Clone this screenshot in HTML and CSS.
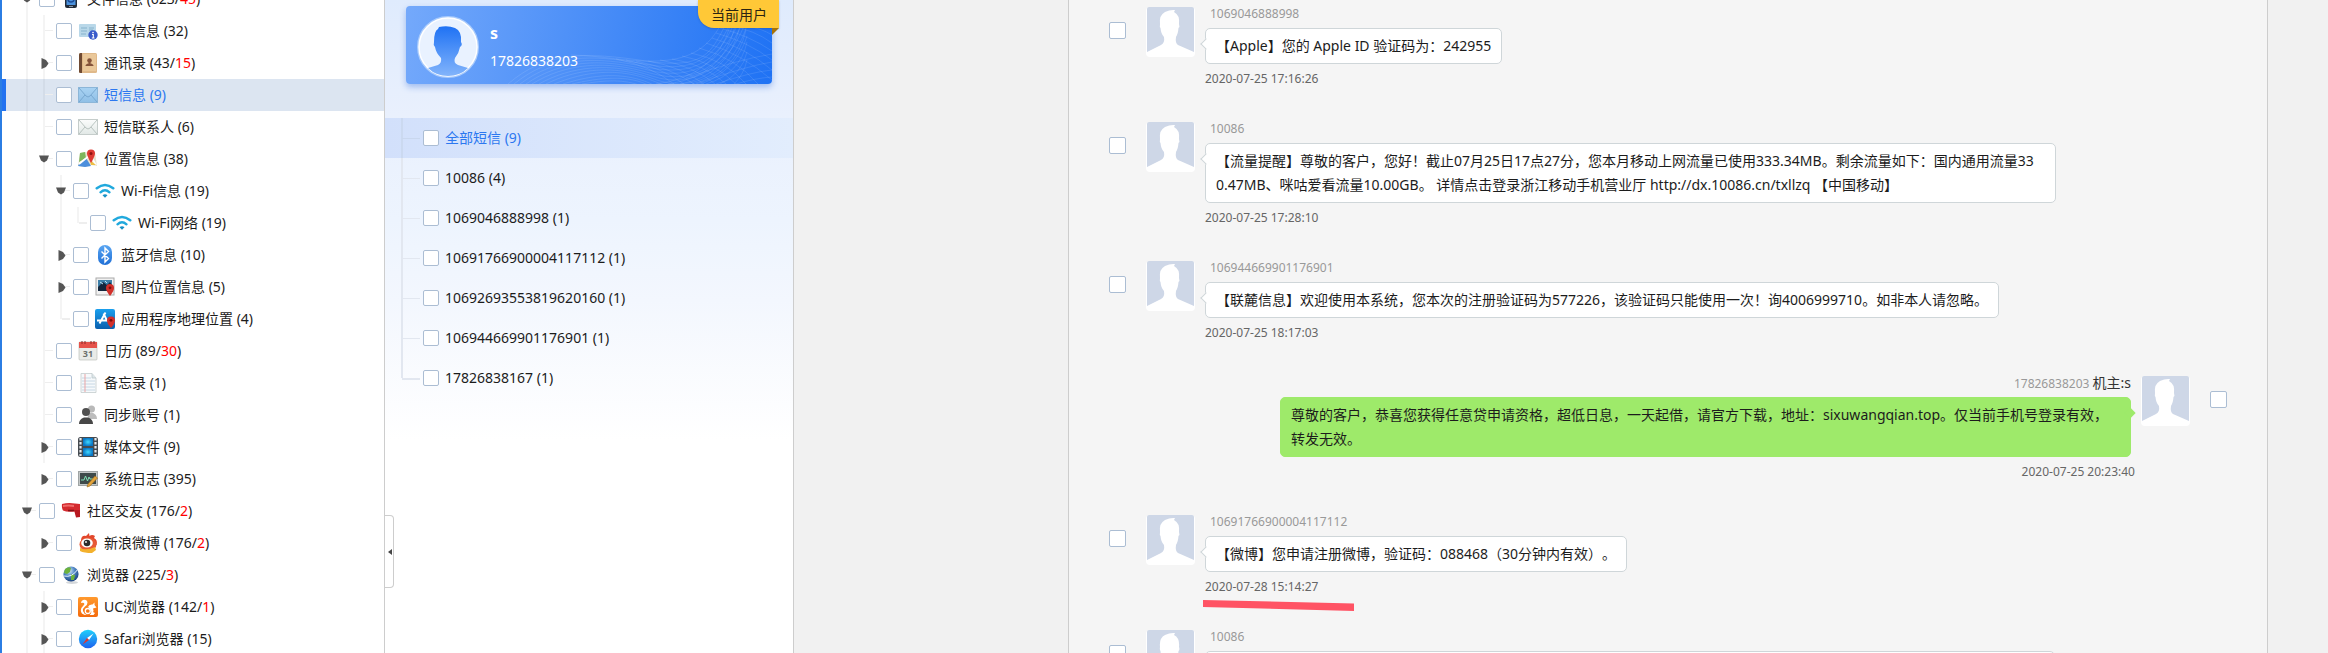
FILE: index.html
```html
<!DOCTYPE html>
<html lang="zh-CN">
<head>
<meta charset="utf-8">
<title>短信息</title>
<link rel="stylesheet" href="styles.css">
</head>
<body>
<svg class="defs" aria-hidden="true">
  <defs>
    <linearGradient id="g-sky" x1="0" y1="0" x2="0" y2="1"><stop offset="0" stop-color="#a9d3f3"/><stop offset="1" stop-color="#8fbfe6"/></linearGradient>
    <linearGradient id="g-pale" x1="0" y1="0" x2="0" y2="1"><stop offset="0" stop-color="#fbfcfc"/><stop offset="1" stop-color="#e1e8e6"/></linearGradient>
    <linearGradient id="g-bt" x1="0" y1="0" x2="0" y2="1"><stop offset="0" stop-color="#5aa6f2"/><stop offset="1" stop-color="#1f6fd6"/></linearGradient>
    <linearGradient id="g-app" x1="0" y1="0" x2="0" y2="1"><stop offset="0" stop-color="#1aa0ee"/><stop offset="1" stop-color="#0a5fae"/></linearGradient>
    <linearGradient id="g-safari" x1="0" y1="0" x2="0" y2="1"><stop offset="0" stop-color="#1fd0fb"/><stop offset="1" stop-color="#1f62ee"/></linearGradient>
    <linearGradient id="g-uc" x1="0" y1="0" x2="0" y2="1"><stop offset="0" stop-color="#ff9a2e"/><stop offset="1" stop-color="#f46a0c"/></linearGradient>
    <linearGradient id="g-head" x1="0" y1="0" x2="0" y2="1"><stop offset="0" stop-color="#1f72f4"/><stop offset="1" stop-color="#82b4fb"/></linearGradient>
    <radialGradient id="g-globe" cx=".4" cy=".3" r=".7"><stop offset="0" stop-color="#d5e9fb"/><stop offset=".5" stop-color="#4f86c4"/><stop offset="1" stop-color="#1c4482"/></radialGradient>
    <radialGradient id="g-film"><stop offset="0" stop-color="#3fd8ff"/><stop offset="1" stop-color="#0a76c4"/></radialGradient>
  </defs>
  <symbol id="i-down" viewBox="0 0 10 8"><path d="M0 .5h10L8 5.5 5 7.500 2 5.500z" fill="#555"/></symbol>
  <symbol id="i-right" viewBox="0 0 8 11"><path d="M.5 0 5 2l2.500 3.500L5 9 .5 11z" fill="#555"/></symbol>
  <symbol id="i-phone" viewBox="0 0 20 20"><rect x="4" y="0" width="12" height="19" rx="2" fill="#222c3a"/><rect x="5.500" y="2" width="9" height="14" fill="#4b92dd"/><circle cx="10" cy="10" r="3" fill="none" stroke="#1d4b96" stroke-width="1.500"/><rect x="8" y="17" width="4" height="1" fill="#8794a4"/></symbol>
  <symbol id="i-info" viewBox="0 0 20 20"><rect x="1" y="3" width="17" height="13" rx="1" fill="#b9d8e9"/><path d="M3 7h6M3 10h6M3 13h5M11 7h5M11 9h4" stroke="#86b3cd"/><circle cx="15" cy="14" r="4.700" fill="#3a5ccb"/><circle cx="15" cy="11.600" r=".8" fill="#fff"/><path d="M14 13.500h1.300V17M13.800 17h2.700" stroke="#fff" stroke-width="1.100" fill="none"/></symbol>
  <symbol id="i-book" viewBox="0 0 20 20"><rect x="1" y="0" width="18" height="20" rx="1.500" fill="#e0b98a"/><rect x="5" y="1" width="13" height="17" fill="#eac89a"/><path d="M1 1.500Q1 0 2.500 0H4v20H2.500Q1 20 1 18.500z" fill="#6f4a33"/><circle cx="11.500" cy="7.500" r="2.300" fill="#84533a"/><path d="M7.500 13q0-2 3-2.500V9h2v1.500q3 .5 3 2.500z" fill="#84533a"/></symbol>
  <symbol id="i-mail-blue" viewBox="0 0 20 20"><rect x=".5" y="2.500" width="19" height="15" fill="url(#g-sky)" stroke="#8cb6d8"/><path d="M1 3l7 8q2 2 4 0l7-8M1 17l6-7M19 17l-6-7" fill="none" stroke="#6f9fc9" stroke-width=".8"/></symbol>
  <symbol id="i-mail" viewBox="0 0 20 20"><rect x=".5" y="2.500" width="19" height="15" fill="url(#g-pale)" stroke="#c5cdcb"/><path d="M1 3l7 8q2 2 4 0l7-8M1 17l6-7M19 17l-6-7" fill="none" stroke="#a9b6b2" stroke-width=".8"/></symbol>
  <symbol id="i-map" viewBox="0 0 20 20"><path d="M2 4l5-1 5 1 5-1 2 14-6-1-6 2-7-1z" fill="#e8e2cc"/><path d="M2 4l5-1 1 6-7 4z" fill="#7db65c"/><path d="M1 15l7-6 5 8-6 1-7-1z" fill="#4c8fdc"/><path d="M1 15l11-9 6 10" fill="none" stroke="#fff" stroke-width="1.800"/><path d="M12 11l6 5-5 0z" fill="#eebf45"/><path d="M13 14Q9 7 9 4.500A4 4 0 0 1 17 4.500Q17 7 13 14z" fill="#dd3a33"/><circle cx="13" cy="4.500" r="1.500" fill="#8e1410"/></symbol>
  <symbol id="i-wifi" viewBox="0 0 20 20"><g fill="none" stroke="#21a9dd" stroke-linecap="round"><path d="M1.800 7.200Q10 .8 18.200 7.200" stroke-width="2.600"/><path d="M5.500 11.300Q10 7.300 14.500 11.300" stroke-width="2.400"/></g><path d="M7.500 14.200q2.500-1.700 5 0L10 16.700z" fill="#1790c6"/></symbol>
  <symbol id="i-bt" viewBox="0 0 20 20"><rect x="3" y="0" width="14" height="20" rx="7" fill="url(#g-bt)"/><path d="M6.500 6.500l7 7L10 17V3l3.500 3.500-7 7" fill="none" stroke="#fff" stroke-width="1.400"/></symbol>
  <symbol id="i-photo" viewBox="0 0 20 20"><rect x="1" y="1" width="18" height="17" fill="#f1f1f1" stroke="#aaa"/><rect x="3" y="3" width="14" height="11" fill="#14263d"/><path d="M3 10l5-5 4 3 3-3 2 3v-5H3z" fill="#3d7fa8"/><path d="M5 5l3 2M10 4l2 2" stroke="#bfe3f2"/><path d="M15 19q-4-5-4-8a4 4 0 0 1 8 0q0 3-4 8z" fill="#d2302b"/><circle cx="15" cy="10.800" r="1.400" fill="#7e0f0c"/></symbol>
  <symbol id="i-app" viewBox="0 0 20 20"><rect width="20" height="20" rx="2" fill="url(#g-app)"/><path d="M10.500 3.500L4.500 14.500M8.500 4.500l4 8M2 11.500h9" stroke="#fff" stroke-width="1.900" fill="none"/><path d="M16 19q-4-4.500-4-7.500a4 4 0 0 1 8 0q0 3-4 7.500z" fill="#d2302b"/><circle cx="16" cy="11.300" r="1.400" fill="#7e0f0c"/></symbol>
  <symbol id="i-cal" viewBox="0 0 20 20"><rect x="1" y="1" width="18" height="18" rx="1" fill="#e9ebe8" stroke="#b5b8b4" stroke-width=".6"/><path d="M1 1h18v6H1z" fill="#e6534b"/><path d="M4 0v3M7 0v3M13 0v3M16 0v3" stroke="#8c2f2a"/><text x="10" y="15.500" font-family="Noto Sans" font-size="9" font-weight="700" text-anchor="middle" fill="#6b706d">31</text></symbol>
  <symbol id="i-note" viewBox="0 0 20 20"><path d="M3 .5h11l4 4.500v14.500H3z" fill="#f6f9fb" stroke="#c4cccd" stroke-width=".8"/><path d="M14 .5V5h4" fill="#dde6ea" stroke="#b8c3c6" stroke-width=".7"/><path d="M4 5h9M4 8h13M4 11h13M4 14h13M4 17h13" stroke="#bccfe0" stroke-width=".8"/><path d="M7 1v18" stroke="#eba5a5"/></symbol>
  <symbol id="i-users" viewBox="0 0 20 20"><circle cx="13.500" cy="4" r="3.500" fill="#b9b9b9"/><path d="M10 14q-1-6 3-6.500 6 1 6 6.500z" fill="#bdbdbd"/><circle cx="8" cy="7" r="4" fill="#505050"/><path d="M1 19q0-5 5-6.500h4q5 1.500 5 6.500z" fill="#474747"/></symbol>
  <symbol id="i-film" viewBox="0 0 20 20"><rect width="20" height="20" rx="2.500" fill="#454b51"/><path d="M2.500 1v18M17.500 1v18" stroke="#e8eaec" stroke-width="2.200" stroke-dasharray="2.500 1.500"/><rect x="5" y="1" width="10" height="8" fill="url(#g-film)"/><rect x="5" y="11" width="10" height="8" fill="url(#g-film)"/></symbol>
  <symbol id="i-log" viewBox="0 0 20 20"><rect x=".5" y="2.500" width="19" height="14" fill="#c2c6c6" stroke="#9fa4a4"/><rect x="2" y="4" width="16" height="11" fill="#3e4a4a"/><path d="M3 11h3l1.500-4 2 5 1.500-4 1 2h3" fill="none" stroke="#7fe0b4"/><path d="M9 18l1-3 7-8 2.500 2-7.500 8z" fill="#e3a43c" stroke="#9b6a1b" stroke-width=".6"/></symbol>
  <symbol id="i-cam" viewBox="0 0 20 20"><path d="M1 3q6-1.500 13-.5l5 .5v7l-5 .5Q6 11.500 2 9.500.5 7 1 3z" fill="#d42a2e"/><path d="M13 9h6v7l-4 .5z" fill="#b81820"/><path d="M2 4q6-1 11 0v2q-6-1-11 0z" fill="#ef6a68"/><path d="M7 9.500h6" stroke="#821016" stroke-width="1.500"/></symbol>
  <symbol id="i-weibo" viewBox="0 0 20 20"><path d="M3 8Q3 2 8 3l3-3 .5 3Q14 1 17 3l-1 2q4 2 2.500 7z" fill="#e2472c"/><ellipse cx="10" cy="11.500" rx="8.500" ry="7" fill="#e75a36"/><path d="M2 15q6 3 15-1l1 3-4 3q-8 0-12-2z" fill="#f3b12d"/><ellipse cx="9" cy="10" rx="5.800" ry="4.500" fill="#fff"/><circle cx="9" cy="10" r="3.300" fill="#2b2b2b"/><circle cx="8" cy="9" r="1.100" fill="#ddd"/></symbol>
  <symbol id="i-globe" viewBox="0 0 20 20"><ellipse cx="11" cy="17.500" rx="6" ry="1.500" fill="#d4d7da"/><circle cx="10" cy="9" r="7.600" fill="url(#g-globe)"/><path d="M4 4q4-3 6-1l-1 4-3 2-3-1zM10 9l4 1-1 5-3 0z" fill="#6cb23c"/><path d="M3 11q8 2 14-7" fill="none" stroke="#e6f2ff"/></symbol>
  <symbol id="i-uc" viewBox="0 0 20 20"><rect width="20" height="20" rx="2" fill="url(#g-uc)"/><path d="M5 3Q9 2 9.500 5.500 9.500 8 7 9.500 4.500 11.500 5 14 6 17 9 18H7Q3 17 2.800 13.500 3 10.500 5.500 8.500 7 7 6 6 5 5.500 3 6 3 4 5 3z" fill="#fff"/><path d="M10 10Q11 7 14.500 7.500L16.500 5.500V8l2 2.500-3.500 1Q16 14 15 15l2 1-1.500 2h-4Q14 16 13 13.500 12 11 10 10z" fill="#fff"/><circle cx="9.800" cy="14" r="2.500" fill="none" stroke="#fff" stroke-width="1.300"/></symbol>
  <symbol id="i-safari" viewBox="0 0 20 20"><circle cx="10" cy="10" r="9.200" fill="url(#g-safari)"/><path d="M15.500 4.500L11 11 9 9z" fill="#fff"/><path d="M4.500 15.500L9 9l2 2z" fill="#e2332e"/></symbol>
  <symbol id="i-person" viewBox="0 0 49 50"><rect width="49" height="50" rx="4" fill="#fff"/><rect x="1" width="47" height="47" rx="2" fill="#ced7e7"/><path d="M1 45L15 38Q19 36 18 30 15 27 14.500 21 13.500 20 14 17 13 8 19 5 24 2.500 29 3L28 5Q34 8 33 17 34 20 32.500 21 32 27 30 30 29 36 32 38L48 45V48H1z" fill="#fff"/></symbol>
</svg>

<div class="app">
  <nav class="sidebar" aria-label="数据目录">
    <ul class="tree">
      <li>
        <div class="row"><button class="twist" aria-label="收起"><svg class="down"><use href="#i-down"/></svg></button><label><input type="checkbox"><svg class="icon"><use href="#i-phone"/></svg><span>文件信息 (623/<em>45</em>)</span></label></div>
        <ul class="lv2 lined">
          <li><div class="row"><span class="twist"></span><label><input type="checkbox"><svg class="icon"><use href="#i-info"/></svg><span>基本信息 (32)</span></label></div></li>
          <li><div class="row"><button class="twist" aria-label="展开"><svg class="right"><use href="#i-right"/></svg></button><label><input type="checkbox"><svg class="icon"><use href="#i-book"/></svg><span>通讯录 (43/<em>15</em>)</span></label></div></li>
          <li><div class="row selected"><span class="twist"></span><label><input type="checkbox"><svg class="icon"><use href="#i-mail-blue"/></svg><span>短信息 (9)</span></label></div></li>
          <li><div class="row"><span class="twist"></span><label><input type="checkbox"><svg class="icon"><use href="#i-mail"/></svg><span>短信联系人 (6)</span></label></div></li>
          <li>
            <div class="row"><button class="twist" aria-label="收起"><svg class="down"><use href="#i-down"/></svg></button><label><input type="checkbox"><svg class="icon"><use href="#i-map"/></svg><span>位置信息 (38)</span></label></div>
            <ul class="lv3 lined leaf-end">
              <li>
                <div class="row"><button class="twist" aria-label="收起"><svg class="down"><use href="#i-down"/></svg></button><label><input type="checkbox"><svg class="icon"><use href="#i-wifi"/></svg><span>Wi-Fi信息 (19)</span></label></div>
                <ul class="lv4 lined leaf-end">
                  <li><div class="row"><span class="twist corner"></span><label><input type="checkbox"><svg class="icon"><use href="#i-wifi"/></svg><span>Wi-Fi网络 (19)</span></label></div></li>
                </ul>
              </li>
              <li><div class="row"><button class="twist" aria-label="展开"><svg class="right"><use href="#i-right"/></svg></button><label><input type="checkbox"><svg class="icon"><use href="#i-bt"/></svg><span>蓝牙信息 (10)</span></label></div></li>
              <li><div class="row"><button class="twist" aria-label="展开"><svg class="right"><use href="#i-right"/></svg></button><label><input type="checkbox"><svg class="icon"><use href="#i-photo"/></svg><span>图片位置信息 (5)</span></label></div></li>
              <li><div class="row"><span class="twist corner"></span><label><input type="checkbox"><svg class="icon"><use href="#i-app"/></svg><span>应用程序地理位置 (4)</span></label></div></li>
            </ul>
          </li>
          <li><div class="row"><span class="twist"></span><label><input type="checkbox"><svg class="icon"><use href="#i-cal"/></svg><span>日历 (89/<em>30</em>)</span></label></div></li>
          <li><div class="row"><span class="twist"></span><label><input type="checkbox"><svg class="icon"><use href="#i-note"/></svg><span>备忘录 (1)</span></label></div></li>
          <li><div class="row"><span class="twist"></span><label><input type="checkbox"><svg class="icon"><use href="#i-users"/></svg><span>同步账号 (1)</span></label></div></li>
          <li><div class="row"><button class="twist" aria-label="展开"><svg class="right"><use href="#i-right"/></svg></button><label><input type="checkbox"><svg class="icon"><use href="#i-film"/></svg><span>媒体文件 (9)</span></label></div></li>
          <li><div class="row"><button class="twist" aria-label="展开"><svg class="right"><use href="#i-right"/></svg></button><label><input type="checkbox"><svg class="icon"><use href="#i-log"/></svg><span>系统日志 (395)</span></label></div></li>
        </ul>
      </li>
      <li>
        <div class="row"><button class="twist" aria-label="收起"><svg class="down"><use href="#i-down"/></svg></button><label><input type="checkbox"><svg class="icon"><use href="#i-cam"/></svg><span>社区交友 (176/<em>2</em>)</span></label></div>
        <ul class="lv2">
          <li><div class="row"><button class="twist" aria-label="展开"><svg class="right"><use href="#i-right"/></svg></button><label><input type="checkbox"><svg class="icon"><use href="#i-weibo"/></svg><span>新浪微博 (176/<em>2</em>)</span></label></div></li>
        </ul>
      </li>
      <li>
        <div class="row"><button class="twist" aria-label="收起"><svg class="down"><use href="#i-down"/></svg></button><label><input type="checkbox"><svg class="icon"><use href="#i-globe"/></svg><span>浏览器 (225/<em>3</em>)</span></label></div>
        <ul class="lv2 lined open-end">
          <li><div class="row"><button class="twist" aria-label="展开"><svg class="right"><use href="#i-right"/></svg></button><label><input type="checkbox"><svg class="icon"><use href="#i-uc"/></svg><span>UC浏览器 (142/<em>1</em>)</span></label></div></li>
          <li><div class="row"><button class="twist" aria-label="展开"><svg class="right"><use href="#i-right"/></svg></button><label><input type="checkbox"><svg class="icon"><use href="#i-safari"/></svg><span>Safari浏览器 (15)</span></label></div></li>
        </ul>
      </li>
    </ul>
  </nav>

  <aside class="contacts">
    <section class="card">
      <svg class="waves" viewBox="0 0 366 78" preserveAspectRatio="xMaxYMid slice" aria-hidden="true">
        <g fill="none" stroke="#fff" stroke-opacity=".13" stroke-width=".8">
          <path d="M165 49C200 50 220 56 250 55S300 45 314 20"/>
          <path d="M102 78C140 45 180 46 240 55S305 45 319 20"/>
          <path d="M108 78C145 48 185 48 238 58S308 50 323 20"/>
          <path d="M114 78C150 51 190 50 240 61S312 52 327 20"/>
          <path d="M120 78C155 54 195 52 242 64S315 54 331 20"/>
          <path d="M126 78C160 57 200 54 244 67S318 58 335 20"/>
          <path d="M133 78C165 60 205 56 246 70S322 60 338 20"/>
          <path d="M140 78C170 63 208 58 248 73S326 66 340 22"/>
          <path d="M148 78C178 66 212 60 250 76S330 68 341 30"/>
          <path d="M157 78C186 69 218 64 250 80"/>
          <path d="M166 78C192 72 222 68 244 80"/>
          <path d="M176 78C200 74 218 73 236 80"/>
          <path d="M210 53Q245 60 268 78M220 54Q255 61 278 78M230 55Q265 62 288 78M242 55Q276 61 298 78M254 54Q288 60 309 78M266 53Q298 58 320 78M276 50Q308 56 330 78M285 47Q320 54 340 78M293 42Q330 52 352 78M300 37Q336 48 366 74M306 32Q340 42 366 64M310 27Q342 36 366 54M314 22Q344 30 366 45M325 20Q348 24 366 37M340 20Q355 22 366 29"/>
          <path d="M250 78Q310 70 324 20M262 78Q318 70 329 20M274 78Q322 70 334 20M286 78Q330 68 340 24M300 78Q334 68 341 36M314 78Q336 68 341 46M328 78Q338 68 341 54"/>
          <path d="M290 78Q340 60 366 56M310 78Q345 66 366 64M330 78Q350 72 366 71M280 72Q330 54 366 48"/>
        </g>
      </svg>
      <svg class="portrait" viewBox="0 0 62 62" aria-hidden="true">
        <circle cx="31" cy="31" r="30" fill="#e9f2ff" stroke="#a9cbfc" stroke-width="2"/>
        <circle cx="31" cy="31" r="29" fill="none" stroke="#fff" stroke-width="1.500"/>
        <path d="M11 52L21 49Q25 47 24 42 19 37 18 31 16 29 17 26 17 15 21 13L22 11Q31 9 38 12 45 15 44 26 46 29 43 31 42 37 38 42 36 47 41 49L51 52Q43 60 31 60T11 52z" fill="url(#g-head)"/>
      </svg>
      <div class="who"><strong>s</strong><span>17826838203</span></div>
      <span class="badge">当前用户</span>
    </section>
    <ul class="threads">
      <li class="selected"><label><input type="checkbox"><span>全部短信 (9)</span></label></li>
      <li><label><input type="checkbox"><span>10086 (4)</span></label></li>
      <li><label><input type="checkbox"><span>1069046888998 (1)</span></label></li>
      <li><label><input type="checkbox"><span>10691766900004117112 (1)</span></label></li>
      <li><label><input type="checkbox"><span>10692693553819620160 (1)</span></label></li>
      <li><label><input type="checkbox"><span>106944669901176901 (1)</span></label></li>
      <li><label><input type="checkbox"><span>17826838167 (1)</span></label></li>
    </ul>
    <button class="collapse" aria-label="收起侧栏"><svg viewBox="0 0 4 6"><path d="M4 0v6L0 3z" fill="#444"/></svg></button>
  </aside>

  <main class="chat">
    <div class="messages">
      <article class="msg">
        <input type="checkbox" aria-label="选择消息"><svg class="avatar"><use href="#i-person"/></svg>
        <div class="body"><div class="name">1069046888998</div><p class="bubble">【Apple】您的 Apple ID 验证码为：242955</p><time>2020-07-25 17:16:26</time></div>
      </article>
      <article class="msg">
        <input type="checkbox" aria-label="选择消息"><svg class="avatar"><use href="#i-person"/></svg>
        <div class="body"><div class="name">10086</div><p class="bubble">【流量提醒】尊敬的客户，您好！截止07月25日17点27分，您本月移动上网流量已使用333.34MB。剩余流量如下：国内通用流量330.47MB、咪咕爱看流量10.00GB。 详情点击登录浙江移动手机营业厅 http://dx.10086.cn/txllzq 【中国移动】</p><time>2020-07-25 17:28:10</time></div>
      </article>
      <article class="msg">
        <input type="checkbox" aria-label="选择消息"><svg class="avatar"><use href="#i-person"/></svg>
        <div class="body"><div class="name">106944669901176901</div><p class="bubble">【联麓信息】欢迎使用本系统，您本次的注册验证码为577226，该验证码只能使用一次！询4006999710。如非本人请忽略。</p><time>2020-07-25 18:17:03</time></div>
      </article>
      <article class="msg own">
        <input type="checkbox" aria-label="选择消息"><svg class="avatar"><use href="#i-person"/></svg>
        <div class="body"><div class="name">17826838203 <b>机主:s</b></div><p class="bubble">尊敬的客户，恭喜您获得任意贷申请资格，超低日息，一天起借，请官方下载，地址：sixuwangqian.top。仅当前手机号登录有效，转发无效。</p><time>2020-07-25 20:23:40</time></div>
      </article>
      <article class="msg">
        <input type="checkbox" aria-label="选择消息"><svg class="avatar"><use href="#i-person"/></svg>
        <div class="body"><div class="name">10691766900004117112</div><p class="bubble">【微博】您申请注册微博，验证码：088468（30分钟内有效）。</p><time>2020-07-28 15:14:27</time>
          <svg class="mark" viewBox="0 0 151 11" aria-hidden="true"><path d="M0 0L151 3.500V11L0 7z" fill="#ff5364"/></svg></div>
      </article>
      <article class="msg">
        <input type="checkbox" aria-label="选择消息"><svg class="avatar"><use href="#i-person"/></svg>
        <div class="body"><div class="name">10086</div><p class="bubble full"></p></div>
      </article>
    </div>
  </main>
</div>
</body>
</html>
```
FILE: styles.css
```css
* { box-sizing: border-box; }

body {
  margin: 0;
  overflow: hidden;
  font: 14px/24px "Noto Sans", "Noto Sans CJK SC", sans-serif;
  color: #1c1c1c;
  text-spacing-trim: space-all;
}

ul { margin: 0; padding: 0; list-style: none; }
em { font-style: normal; color: #f00; }
button { border: 0; padding: 0; background: none; }
svg { display: block; flex: none; }
.defs { position: absolute; width: 0; height: 0; }

input[type="checkbox"] {
  appearance: none;
  flex: none;
  width: 16px;
  height: 16px;
  margin: 0;
  border: 1px solid #abbdd3;
  border-radius: 2px;
  background: #fff;
}

.app {
  display: flex;
  height: 100vh;
  border-left: 2px solid #2b7de3;
  background: #f1f1f1;
}

/* directory tree */
.sidebar {
  flex: none;
  width: 383px;
  overflow: hidden;
  border-right: 1px solid #cdcdcd;
  background: #fff;
}
.tree {
  margin-top: -17px;
  background: linear-gradient(#f4f4f4, #f4f4f4) 24px 0 / 2px 100% no-repeat;
}
.row {
  display: flex;
  align-items: center;
  height: 32px;
  padding-left: 20px;
}
.row label { display: flex; align-items: center; gap: 6px; white-space: nowrap; }
.lv2 .row { padding-left: 37px; }
.lv3 .row { padding-left: 54px; }
.lv4 .row { padding-left: 71px; }
.lined { background: linear-gradient(#f4f4f4, #f4f4f4) 41px 0 / 2px calc(100% - 32px) no-repeat; }
.lv3.lined { background-position: 58px 0; }
.lv4.lined { background-position: 75px 0; }
.leaf-end.lined { background-size: 2px calc(100% - 16px); }
.open-end.lined { background-size: 2px 100%; }
.twist {
  display: flex;
  align-items: center;
  flex: none;
  width: 17px;
  height: 32px;
  background: linear-gradient(#eee, #eee) 6px 15px / 8px 1px no-repeat;
}
.twist.corner { background-size: 8px 2px; }
.down { width: 10px; height: 8px; }
.right { width: 8px; height: 11px; margin-left: 2px; }
.icon { width: 20px; height: 20px; }
.row.selected {
  background: rgba(80, 125, 185, .2);
  box-shadow: inset 4px 0 #2272f0;
  color: #2c78f0;
}

/* contact list */
.contacts {
  position: relative;
  flex: none;
  width: 409px;
  padding-top: 6px;
  border-right: 1px solid #cdcdcd;
  background: linear-gradient(#dfebfd 0, #e9f0fd 115px, #edf4fe 220px, #f3f7fe 300px, #fff 440px);
}
.card {
  position: relative;
  display: flex;
  align-items: center;
  gap: 11px;
  height: 78px;
  margin: 0 21px 34px;
  padding: 4px 0 0 11px;
  border-radius: 4px;
  background: linear-gradient(100deg, #74a9fb, #1f72f4);
  box-shadow: 0 3px 6px rgba(50, 110, 220, .4);
  color: #fff;
}
.waves { position: absolute; inset: 0; width: 100%; height: 100%; }
.portrait { position: relative; width: 62px; height: 62px; }
.who { position: relative; display: flex; flex-direction: column; gap: 4px; }
.who strong { font-size: 16px; }
.badge {
  position: absolute;
  top: -6px;
  right: -7px;
  height: 28px;
  padding: 3px 12px 0 13px;
  border-bottom-left-radius: 16px;
  background: #ffc837;
  box-shadow: 0 1px 2px rgba(30, 60, 120, .3);
  color: #2b2412;
}
.badge::after {
  content: "";
  position: absolute;
  top: 100%;
  right: 0;
  width: 7px;
  height: 7px;
  background: #a77206;
  clip-path: polygon(0 0, 100% 0, 0 100%);
}
.threads { background: linear-gradient(#e2e7f0, #e2e7f0) 16px 0 / 2px calc(100% - 20px) no-repeat; }
.threads li {
  height: 40px;
  padding: 8px 0 8px 38px;
  background: linear-gradient(#e2e7f0, #e2e7f0) 17px 20px / 18px 1px no-repeat;
}
.threads label { display: flex; align-items: center; gap: 6px; }
.threads .selected {
  background:
    linear-gradient(#c9d7ee, #c9d7ee) 17px 20px / 18px 1px no-repeat,
    linear-gradient(#cbd9f0, #cbd9f0) 16px 0 / 2px 100% no-repeat,
    linear-gradient(90deg, #d2e0fb, #e2edfd);
  color: #2c78f0;
}
.threads li:last-child { background-size: 18px 2px; }
.collapse {
  position: absolute;
  top: 515px;
  left: 0;
  display: flex;
  align-items: center;
  width: 9px;
  height: 73px;
  padding-left: 3px;
  border: 1px solid #cdcdcd;
  border-left: 0;
  border-radius: 0 4px 4px 0;
  background: #fff;
}
.collapse svg { width: 4px; height: 6px; }

/* conversation */
.chat {
  flex: 1;
  min-width: 0;
  padding: 0 60px 0 274px;
}
.messages {
  height: 100%;
  overflow: hidden;
  padding: 6px 40px;
  border: solid #cdcdcd;
  border-width: 0 1px;
  background: #f5f5f5;
}
.msg { display: flex; margin-bottom: 33px; }
.msg > input { width: 17px; height: 17px; margin-top: 16px; }
.avatar { width: 49px; height: 50px; margin: 1px 10px 0 20px; }
.body { position: relative; display: flex; flex-direction: column; align-items: flex-start; }
.name { height: 16px; padding-left: 5px; font-size: 12px; line-height: 16px; color: #999; }
.name b { font-size: 14px; font-weight: 400; color: #333; }
.bubble {
  position: relative;
  max-width: 851px;
  margin: 6px 0;
  padding: 5px 10px;
  border: 1px solid #cfd6d9;
  border-radius: 5px;
  background: #fff;
  word-break: break-all;
}
.bubble::before {
  content: "";
  position: absolute;
  top: 11px;
  left: -4px;
  width: 7px;
  height: 7px;
  border: solid #cfd6d9;
  border-width: 0 0 1px 1px;
  background: #fff;
  transform: rotate(45deg);
}
.bubble.full { width: 850px; height: 60px; }
time { font-size: 12px; line-height: 18px; color: #666; }
.own { flex-direction: row-reverse; }
.own .avatar { margin: 1px 20px 0 10px; }
.own .body { align-items: flex-end; }
.own .bubble { border-color: #9eea6a; background: #9eea6a; }
.own .bubble::before { right: -4px; left: auto; border-color: #9eea6a; background: #9eea6a; }
.own time { margin-right: -4px; }
.mark { position: absolute; top: 86px; left: -2px; width: 151px; height: 11px; }
```
